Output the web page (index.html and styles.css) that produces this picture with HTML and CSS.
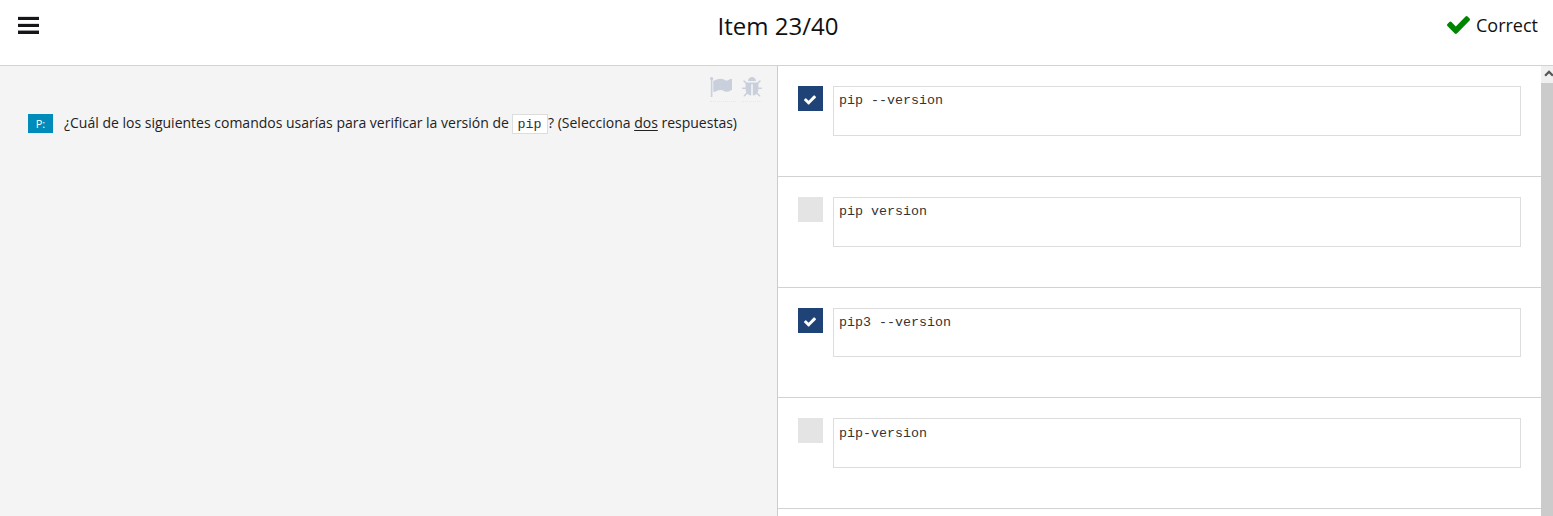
FILE: index.html
```html
<!DOCTYPE html>
<html lang="es">
<head>
<meta charset="utf-8">
<title>Item 23/40</title>
<link rel="stylesheet" href="styles.css">
</head>
<body>
<header class="topbar">
  <button class="menu" aria-label="Menu"><span class="bar"></span><span class="bar"></span><span class="bar"></span></button>
  <h1 class="title">Item 23/40</h1>
  <div class="status">
    <svg class="status-icon" viewBox="121 334 1550 1188" preserveAspectRatio="none"><path d="M1671 566q0 40-28 68l-724 724-136 136q-28 28-68 28t-68-28l-136-136-362-362q-28-28-28-68t28-68l136-136q28-28 68-28t68 28l294 295 656-657q28-28 68-28t68 28l136 136q28 28 28 68z"/></svg>
    <span>Correct</span>
  </div>
</header>
<main class="panes">
  <section class="question">
    <div class="tools">
      <span class="tool"><svg class="flag" viewBox="64 128 1728 1536" preserveAspectRatio="none"><path d="M320 256q0 72-64 110v1266q0 13-9.500 22.500t-22.500 9.500h-64q-13 0-22.500-9.500t-9.500-22.500v-1266q-64-38-64-110 0-53 37.500-90.500t90.500-37.500 90.500 37.500 37.500 90.500zm1472 64v763q0 25-12.500 38.500t-39.500 27.500q-215 116-369 116-61 0-123.500-22t-108.500-48-115.500-48-142.500-22q-192 0-464 146-17 9-33 9-26 0-45-19t-19-45v-742q0-32 31-55 21-14 79-43 236-120 421-120 107 0 200 29t219 88q38 19 88 19 54 0 117.500-21t110-47 88-47 54.500-21q26 0 45 19t19 45z"/></svg></span>
      <span class="tool"><svg class="bug" viewBox="96 64 1600 1600" preserveAspectRatio="none"><path d="M1696 960q0 26-19 45t-45 19h-224q0 171-67 290l208 209q19 19 19 45t-19 45q-18 19-45 19t-45-19l-198-197q-5 5-15 13t-42 28.500-65 36.500-82 29-97 13v-896h-128v896q-51 0-101.500-13.500t-87-33-66-39-43.500-32.500l-15-14-183 207q-20 21-48 21-24 0-43-16-19-18-20.500-44.500t15.500-46.500l202-227q-58-114-58-274h-224q-26 0-45-19t-19-45 19-45 45-19h224v-294l-173-173q-19-19-19-45t19-45 45-19 45 19l173 173h844l173-173q19-19 45-19t45 19 19 45-19 45l-173 173v294h224q26 0 45 19t19 45zm-480-576h-640q0-133 93.500-226.500t226.500-93.500 226.500 93.500 93.500 226.500z"/></svg></span>
    </div>
    <div class="prompt">
      <span class="tag">P:</span>
      <p class="text">¿Cuál de los siguientes comandos usarías para verificar la versión de <code class="inline-code">pip</code>? (Selecciona <u class="key">dos</u> respuestas)</p>
    </div>
  </section>
  <section class="answers">
    <div class="answer">
      <span class="box checked"><svg class="tick" viewBox="121 334 1550 1188"><path d="M1671 566q0 40-28 68l-724 724-136 136q-28 28-68 28t-68-28l-136-136-362-362q-28-28-28-68t28-68l136-136q28-28 68-28t68 28l294 295 656-657q28-28 68-28t68 28l136 136q28 28 28 68z"/></svg></span>
      <pre class="code">pip --version</pre>
    </div>
    <div class="answer">
      <span class="box"></span>
      <pre class="code">pip version</pre>
    </div>
    <div class="answer compact">
      <span class="box checked"><svg class="tick" viewBox="121 334 1550 1188"><path d="M1671 566q0 40-28 68l-724 724-136 136q-28 28-68 28t-68-28l-136-136-362-362q-28-28-28-68t28-68l136-136q28-28 68-28t68 28l294 295 656-657q28-28 68-28t68 28l136 136q28 28 28 68z"/></svg></span>
      <pre class="code">pip3 --version</pre>
    </div>
    <div class="answer last">
      <span class="box"></span>
      <pre class="code">pip-version</pre>
    </div>
  </section>
  <div class="scrollbar">
    <div class="scroll-up"><svg class="chevron" viewBox="0 0 9 6"><path d="M1 5 4.500 1.500 8 5"/></svg></div>
    <div class="thumb"></div>
  </div>
</main>
</body>
</html>
```

FILE: styles.css
```css
* { box-sizing: border-box; }

body {
  margin: 0;
  height: 516px;
  overflow: hidden;
  display: flex;
  flex-direction: column;
  background: #fff;
  color: #222;
  font-family: "Open Sans", sans-serif;
}

.topbar {
  flex: none;
  display: grid;
  grid-template-columns: 1fr auto 1fr;
  align-items: start;
  height: 66px;
  padding: 0 15px 0 18px;
  border-bottom: 1px solid #d2d2d2;
  color: #111;
}

.menu {
  display: flex;
  flex-direction: column;
  gap: 3px;
  width: 21px;
  margin: 16px 0 0;
  padding: 0;
  border: 0;
  background: none;
}

.bar {
  height: 4px;
  background: #15161a;
  border-top: 1px solid #ddd;
}

.bar:last-child { border-top-color: #999; }

.title {
  margin: 9px 0 0;
  font-size: 24px;
  font-weight: 400;
  line-height: 33px;
}

.status {
  display: flex;
  justify-content: flex-end;
  gap: 6px;
  margin-top: 13px;
  font-size: 18px;
  line-height: 25px;
}

.status-icon {
  width: 23px;
  height: 18px;
  margin-top: 3px;
  fill: #008500;
}

.panes {
  flex: 1;
  display: grid;
  grid-template-columns: 778px 1fr 12px;
  min-height: 0;
}

.question {
  background: #f4f4f4;
  border-right: 1px solid #ccc;
}

.tools {
  display: flex;
  align-items: flex-start;
  justify-content: flex-end;
  gap: 6px;
  height: 44px;
  padding: 11px 15px 0 0;
  fill: #c9d0dc;
}

.tool {
  height: 25px;
  border-bottom: 1px dotted #e6e8ec;
}

.flag { width: 22px; height: 20px; margin-right: 4px; }
.bug { width: 20px; height: 20px; }

.prompt {
  display: flex;
  align-items: flex-start;
  gap: 11px;
  padding-left: 28px;
}

.tag {
  width: 25px;
  height: 19px;
  margin-top: 4px;
  background: #008cba;
  color: #fff;
  font-size: 11px;
  line-height: 20px;
  text-align: center;
}

.text {
  margin: 0;
  font-size: 14px;
  line-height: 26px;
  white-space: nowrap;
}

.inline-code {
  margin-left: -1px;
  padding: 2px 5.500px 1px 5px;
  border: 1px solid #ddd;
  background: #fff;
  color: #333;
  font: 13.333px "Liberation Mono", monospace;
}

.key {
  text-underline-offset: 2px;
}

.answers {
  overflow: hidden;
}

.answer {
  display: flex;
  gap: 10px;
  height: 111px;
  padding: 20px 20px 0;
  border-bottom: 1px solid #d2d2d2;
}

.answer.compact { height: 110px; }

.box {
  display: flex;
  align-items: center;
  justify-content: center;
  width: 25px;
  height: 25px;
  background: #e4e4e4;
}

.checked { background: #204377; }

.tick {
  width: 12px;
  height: 10px;
  margin: 2px 1px 0 0;
  fill: #fff;
}

.code {
  flex: 1;
  height: 50px;
  margin: 0;
  padding: 5px;
  border: 1px solid #ddd;
  color: #333;
  font: 13.333px/17px "Liberation Mono", monospace;
}

.compact .code { height: 49px; }
.last .code { padding-top: 6px; }

.scrollbar {
  display: flex;
  flex-direction: column;
  overflow: hidden;
}

.scroll-up {
  height: 17px;
  padding: 4px 0 0 3px;
  background: #f0f0f0;
}

.chevron {
  display: block;
  width: 10px;
  height: 7px;
  fill: none;
  stroke: #555;
  stroke-width: 2;
}

.thumb {
  flex: 1;
  background: #cbcbcb;
}
```
